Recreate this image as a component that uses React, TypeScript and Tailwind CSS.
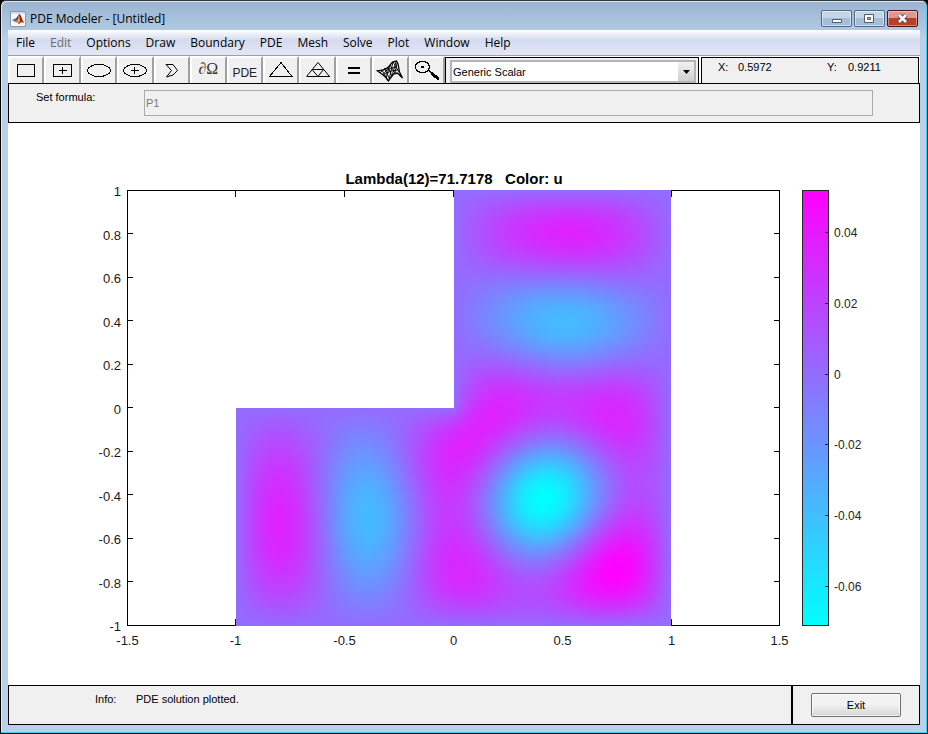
import React from "react";

const UI_FONT = "font-['Open_Sans','Noto_Sans',sans-serif]";
const PANEL_FONT = "font-['Liberation_Sans',Arial,sans-serif]";

const menus = [
  "File",
  "Edit",
  "Options",
  "Draw",
  "Boundary",
  "PDE",
  "Mesh",
  "Solve",
  "Plot",
  "Window",
  "Help",
];

// Grid cells per unit length of the L-shaped membrane
const N = 32;
const SIZE = 2 * N + 1;

// Shifted inverse iteration on the five-point Laplacian
function solveMembrane(shift: number) {
  const index = new Int32Array(SIZE * SIZE).fill(-1);
  const nodes: number[][] = [];
  for (let j = 1; j < 2 * N; j++) {
    for (let i = 1; i < 2 * N; i++) {
      if (i <= N && j <= N) continue;
      index[j * SIZE + i] = nodes.length;
      nodes.push([i, j]);
    }
  }

  const count = nodes.length;
  const band = 2 * N;
  const width = 2 * band + 1;
  const a = new Float64Array(count * width);
  nodes.forEach(([i, j], row) => {
    a[row * width + band] = 4 * N * N - shift;
    for (const [di, dj] of [[1, 0], [-1, 0], [0, 1], [0, -1]]) {
      const col = index[(j + dj) * SIZE + i + di];
      if (col >= 0) a[row * width + col - row + band] = -N * N;
    }
  });

  for (let k = 0; k < count; k++) {
    const last = Math.min(count - 1, k + band);
    for (let r = k + 1; r <= last; r++) {
      const at = r * width + k - r + band;
      if (a[at] === 0) continue;
      const f = a[at] / a[k * width + band];
      a[at] = f;
      for (let c = k + 1; c <= last; c++) {
        a[r * width + c - r + band] -= f * a[k * width + c - k + band];
      }
    }
  }

  const bump = (x: number, y: number, cx: number, cy: number, s: number) =>
    Math.exp(-((x - cx) ** 2 + (y - cy) ** 2) / s);
  let v = Float64Array.from(nodes, ([i, j]) => {
    const x = i / N - 1;
    const y = 1 - j / N;
    return (
      bump(x, y, 0.5, 0.8, 0.03) +
      bump(x, y, -0.8, -0.5, 0.03) -
      bump(x, y, 0.5, 0.4, 0.03) -
      bump(x, y, -0.4, -0.5, 0.03) +
      bump(x, y, 0.75, -0.75, 0.03) -
      2 * bump(x, y, 0.43, -0.43, 0.03)
    );
  });

  for (let pass = 0; pass < 6; pass++) {
    for (let r = 0; r < count; r++) {
      for (let c = Math.max(0, r - band); c < r; c++) {
        v[r] -= a[r * width + c - r + band] * v[c];
      }
    }
    for (let r = count - 1; r >= 0; r--) {
      for (let c = r + 1; c <= Math.min(count - 1, r + band); c++) {
        v[r] -= a[r * width + c - r + band] * v[c];
      }
      v[r] /= a[r * width + band];
    }
    const peak = v.reduce((m, n) => Math.max(m, Math.abs(n)), 0);
    v = v.map((n) => n / peak);
  }

  // The deepest point of the mode is the trough near (0.43, -0.43)
  const trough = v[index[Math.round(1.43 * N) * SIZE + Math.round(1.43 * N)]];
  const sign = trough > 0 ? -1 : 1;
  const u = new Float64Array(SIZE * SIZE);
  nodes.forEach(([i, j], n) => {
    u[j * SIZE + i] = v[n] * sign;
  });
  return u;
}

const STRIP = 2;
const FIELD_HEIGHT = 436;

function buildStrips() {
  const u = solveMembrane(70.8);
  const min = u.reduce((m, n) => Math.min(m, n), 0);
  const max = u.reduce((m, n) => Math.max(m, n), 0);
  const strips = [];
  for (let y = 0; y < FIELD_HEIGHT; y += STRIP) {
    const gy = ((y + STRIP / 2) / FIELD_HEIGHT) * 2 * N;
    const j = Math.floor(gy);
    const t = gy - j;
    const first = y < FIELD_HEIGHT / 2 ? N : 0;
    const colors = [];
    for (let i = first; i < SIZE; i++) {
      const value = u[j * SIZE + i] * (1 - t) + u[(j + 1) * SIZE + i] * t;
      const red = Math.round(((value - min) / (max - min)) * 255);
      colors.push(`rgb(${red},${255 - red},255)`);
    }
    strips.push({ y, half: first === N, colors });
  }
  return strips;
}

const strips = buildStrips();

const xTicks = [
  { x: 119.5, label: "-1.5" },
  { x: 227.5, label: "-1" },
  { x: 336.5, label: "-0.5" },
  { x: 445.5, label: "0" },
  { x: 554.5, label: "0.5" },
  { x: 663.5, label: "1" },
  { x: 771.5, label: "1.5" },
];
const yLabels = ["1", "0.8", "0.6", "0.4", "0.2", "0", "-0.2", "-0.4", "-0.6", "-0.8", "-1"];
const barLabels = ["0.04", "0.02", "0", "-0.02", "-0.04", "-0.06"];

function SolutionPlot() {
  return (
    <svg
      viewBox="0 0 912 562"
      className="block h-auto w-full bg-white font-['Liberation_Sans',Arial,sans-serif]"
      role="img"
      aria-label="PDE solution"
    >
      <defs>
        {strips.map((s) => (
          <linearGradient key={s.y} id={`strip-${s.y}`}>
            {s.colors.map((c, n) => (
              <stop key={n} offset={n / (s.colors.length - 1)} stopColor={c} />
            ))}
          </linearGradient>
        ))}
        <linearGradient id="cool" x1="0" y1="0" x2="0" y2="1">
          <stop offset="0" stopColor="#ff00ff" />
          <stop offset="1" stopColor="#00ffff" />
        </linearGradient>
      </defs>

      <text
        x="446"
        y="61"
        textAnchor="middle"
        className="whitespace-pre text-[15px] font-bold"
      >
        {"Lambda(12)=71.7178   Color: u"}
      </text>

      <g stroke="#000" fill="none" shapeRendering="crispEdges">
        <rect x="119.5" y="67.5" width="652" height="435" />
        {xTicks.map(({ x }) => (
          <path key={x} d={`M${x} 67v7M${x} 503v-7`} />
        ))}
        {yLabels.map((label, n) => {
          const y = Math.floor(67 + n * 43.5) + 0.5;
          return <path key={label} d={`M119 ${y}h6M772 ${y}h-6`} />;
        })}
      </g>

      <g shapeRendering="crispEdges">
        {strips.map((s) => (
          <rect
            key={s.y}
            x={s.half ? 446 : 228}
            y={67 + s.y}
            width={s.half ? 217 : 435}
            height={STRIP}
            fill={`url(#strip-${s.y})`}
          />
        ))}
      </g>

      <g fill="#1a1a1a" className="text-[13px]">
        {xTicks.map(({ x, label }) => (
          <text key={label} x={x} y="522" textAnchor="middle">
            {label}
          </text>
        ))}
        {yLabels.map((label, n) => (
          <text key={label} x="113" y={Math.round(73 + n * 43.5)} textAnchor="end">
            {label}
          </text>
        ))}
      </g>

      <rect
        x="794.5"
        y="67.5"
        width="26"
        height="435"
        fill="url(#cool)"
        stroke="#262626"
        shapeRendering="crispEdges"
      />
      <g fill="#262626" className="text-xs">
        {barLabels.map((label, n) => {
          const y = 109 + Math.round(n * 70.8);
          return (
            <React.Fragment key={label}>
              <path d={`M817 ${y}h4v1h-4z`} />
              <text x="826" y={y + 5}>
                {label}
              </text>
            </React.Fragment>
          );
        })}
      </g>
    </svg>
  );
}

interface ToolProps {
  label: string;
  children: React.ReactNode;
}

function Tool({ label, children }: ToolProps) {
  return (
    <button
      aria-label={label}
      className="flex h-full min-w-0 flex-1 items-center justify-center border-t-2 border-r-2 border-l-2 border-t-white border-r-[#a0a0a0] border-l-white bg-[#f0f0f0]"
    >
      {children}
    </button>
  );
}

function ToolIcon({ children }: { children: React.ReactNode }) {
  return (
    <svg
      width="28"
      height="24"
      viewBox="0 0 28 24"
      fill="none"
      stroke="#000"
      shapeRendering="crispEdges"
      className="shrink-0"
    >
      {children}
    </svg>
  );
}

function Toolbar() {
  return (
    <div className="flex w-[437px] shrink-0">
      <Tool label="Rectangle">
        <ToolIcon>
          <path d="M5.5 5.5h17v12h-17z" />
        </ToolIcon>
      </Tool>
      <Tool label="Centered rectangle">
        <ToolIcon>
          <path d="M4.5 5.5h18v12h-18zM13.5 8v7M10 11.5h8" />
        </ToolIcon>
      </Tool>
      <Tool label="Ellipse">
        <ToolIcon>
          <ellipse cx="14" cy="11.5" rx="11.5" ry="6" />
        </ToolIcon>
      </Tool>
      <Tool label="Centered ellipse">
        <ToolIcon>
          <ellipse cx="14" cy="11.5" rx="11.5" ry="6" />
          <path d="M13.5 8v7M10 11.5h8" />
        </ToolIcon>
      </Tool>
      <Tool label="Polygon">
        <ToolIcon>
          <path d="M8 5.5h7L19.500 11.500 15 16 8.500 18 13.500 11.500z" shapeRendering="auto" />
        </ToolIcon>
      </Tool>
      <Tool label="Boundary mode">
        <span className="pb-1 font-['Liberation_Serif',serif] text-base text-[#333]">
          <i>∂</i>Ω
        </span>
      </Tool>
      <Tool label="PDE specification">
        <span className="pt-1 text-xs text-[#222]">PDE</span>
      </Tool>
      <Tool label="Initialize mesh">
        <ToolIcon>
          <path d="M14 3.500 25 17.500H2.500z" />
        </ToolIcon>
      </Tool>
      <Tool label="Refine mesh">
        <ToolIcon>
          <path d="M2.500 17.500h23M8 10.500h11" />
          <path d="M2.500 17.500 14 3.500l11.500 14M8 10.500l6 7 5.500-7" shapeRendering="auto" />
        </ToolIcon>
      </Tool>
      <Tool label="Solve PDE">
        <ToolIcon>
          <path d="M8 9h12M8 14h12" strokeWidth="2" />
        </ToolIcon>
      </Tool>
      <Tool label="Plot solution">
        <ToolIcon>
          <g shapeRendering="auto">
            <path d="M1.500 12l6-1 5-3 4-5 4-1 1.500 3 1.500 8 3 6-5-5-4 1-3 4-2 3-3-4-5-4z" strokeWidth="1.3" />
            <path
              d="M4 14l5-5M7 16l5-7M10 19l4-13M13 21l4-18M16 17l4-14M19 14l2-10M6 11l6 11M9 10l4 9M12 8l4 9M14 6l5 8M17 3l6 10M10 12l5-3 6-1M9 15l6-3 7-1"
              strokeWidth="0.9"
            />
          </g>
        </ToolIcon>
      </Tool>
      <Tool label="Zoom">
        <ToolIcon>
          <ellipse cx="9.500" cy="8" rx="7" ry="5.500" strokeWidth="1.3" />
          <path d="M8 7h3v2H8z" fill="#000" stroke="none" />
          <path d="M15 11l11 9" strokeWidth="1.5" />
          <path d="M18 14l8 6" strokeWidth="3" />
        </ToolIcon>
      </Tool>
    </div>
  );
}

function TitleBar() {
  return (
    <header className="flex h-[28px] items-start justify-between pr-0.5 pl-0.5 text-[12px]">
      <div className="flex items-center gap-1 pt-2">
        <svg width="16" height="16" viewBox="0 0 16 16">
          <path d="M.5.5h15v15H.5z" fill="#f7f7f7" stroke="#8a98ad" />
          <path d="M1 1h14v2H1z" fill="#cfdceb" />
          <path d="M2 9l3-1.500 2 2L5 11z" fill="#3b7fb8" />
          <path d="M5 8c2-1 3-4 4.500-5L8 9l-1 .5z" fill="#1d4f86" />
          <path d="M5 11c3-1 3-7 4.500-8 1.500 1 2.500 6 4.500 9-2-1.500-3-1-5 1.500C8 12 7 11 5 11z" fill="#d9541e" />
          <path d="M9.500 3c1.500 1 2.500 6 4.500 9-2-1.500-3-1-3.500-.5z" fill="#8f2212" />
          <path d="M9 5l1 5-2 2-1-1z" fill="#f6a13a" />
        </svg>
        <h1>PDE Modeler - [Untitled]</h1>
      </div>
      <div className="flex gap-0.5 pt-2">
        <button
          aria-label="Minimize"
          className="flex h-[17px] w-[31px] items-center justify-center rounded-xs border border-[#526887] bg-linear-to-b from-[#c4d5e8] from-50% to-[#a4bdd8] to-50% inset-ring inset-ring-white/50"
        >
          <svg width="12" height="13">
            <path d="M1.500 7.500h9v3h-9z" fill="#fff" stroke="#505a6b" />
          </svg>
        </button>
        <button
          aria-label="Maximize"
          className="flex h-[17px] w-[31px] items-center justify-center rounded-xs border border-[#526887] bg-linear-to-b from-[#c4d5e8] from-50% to-[#a4bdd8] to-50% inset-ring inset-ring-white/50"
        >
          <svg width="11" height="11">
            <path d="M.5 1.500h9v8h-9zM3.500 4.500v2h3v-2z" fill="#fff" fillRule="evenodd" stroke="#505a6b" />
          </svg>
        </button>
        <button
          aria-label="Close"
          className="flex h-[17px] w-[31px] items-center justify-center rounded-xs border border-[#4b1418] bg-linear-to-b from-[#dc9a8e] from-50% to-[#bb3e27] to-50% inset-ring inset-ring-white/40"
        >
          <svg width="13" height="11">
            <path d="M3 2l7 7M10 2L3 9" stroke="#50506b" strokeWidth="4.500" />
            <path d="M3 2l7 7M10 2L3 9" stroke="#fff" strokeWidth="2.500" />
          </svg>
        </button>
      </div>
    </header>
  );
}

export default function App() {
  return (
    <div className="min-h-screen bg-black">
      <div
        className={`flex min-h-screen flex-col rounded-t-md border border-black border-t-[#303840] bg-[#b9d1ea] bg-linear-to-b from-[#9ab3d0] to-[#b9d1ea] to-[40px] px-[7px] pt-px pb-2 inset-shadow-[-1px_-1px_0_#3fd5f0,1px_1px_0_#dce8f5] text-black ${UI_FONT}`}
      >
        <TitleBar />

        <nav className="flex h-[26px] items-center gap-[15px] border-b border-[#a0a0a0] bg-linear-to-b from-white via-[#d4dbee] via-40% to-[#e2e7f6] px-2 text-[12px]">
          {menus.map((name) => (
            <button key={name} disabled={name === "Edit"} className="disabled:text-[#6d6d6d]">
              {name}
            </button>
          ))}
        </nav>

        <main className={`flex flex-1 flex-col bg-white text-[11px] ${PANEL_FONT}`}>
          <div className="flex h-[27px]">
            <Toolbar />
            <div className="mt-px flex min-w-0 flex-1 border border-b-0 border-black bg-[#f0f0f0] pt-0.5 pr-0.5 pl-1">
              <div className="relative flex w-full border-2 border-[#b4b4b8] bg-white">
                <select
                  aria-label="Application"
                  className="w-full appearance-none bg-transparent pt-0.5 pl-px text-[11px]"
                >
                  <option>Generic Scalar</option>
                </select>
                <span className="pointer-events-none absolute inset-y-0 right-0 flex w-4 items-center justify-center bg-linear-to-b from-[#f2f2f2] to-[#cfcfcf]">
                  <svg width="7" height="4">
                    <path d="M0 0h7L3.500 4z" />
                  </svg>
                </span>
              </div>
            </div>
            <div className="mt-px mr-px ml-0.5 flex w-[218px] shrink-0 border border-b-0 border-black bg-[#f0f0f0] pt-px pl-4">
              <span className="w-5">X:</span>
              <span className="w-[89px]">0.5972</span>
              <span className="w-[21px]">Y:</span>
              <span>0.9211</span>
            </div>
          </div>

          <div className="flex h-10 items-start border border-black bg-[#f0f0f0] pr-[46px] pl-[27px]">
            <label htmlFor="formula" className="w-[108px] pt-[5px]">
              Set formula:
            </label>
            <input
              id="formula"
              disabled
              defaultValue="P1"
              className="mt-1.5 h-[26px] min-w-0 flex-1 border border-[#a9a9ad] px-px text-[#7a7a7a]"
            />
          </div>

          <SolutionPlot />

          <footer className="mt-auto flex h-10 border border-black bg-[#f0f0f0]">
            <div className="flex flex-1 border-r-2 border-black pt-[5px] pl-[86px]">
              <span className="w-[41px]">Info:</span>
              <output>PDE solution plotted.</output>
            </div>
            <div className="flex w-[126px] items-center justify-center">
              <button className="h-6 w-[90px] rounded-xs border border-[#707070] bg-linear-to-b from-[#f2f2f2] from-50% to-[#d4d4d4] inset-ring inset-ring-white/70">
                Exit
              </button>
            </div>
          </footer>
        </main>
      </div>
    </div>
  );
}
